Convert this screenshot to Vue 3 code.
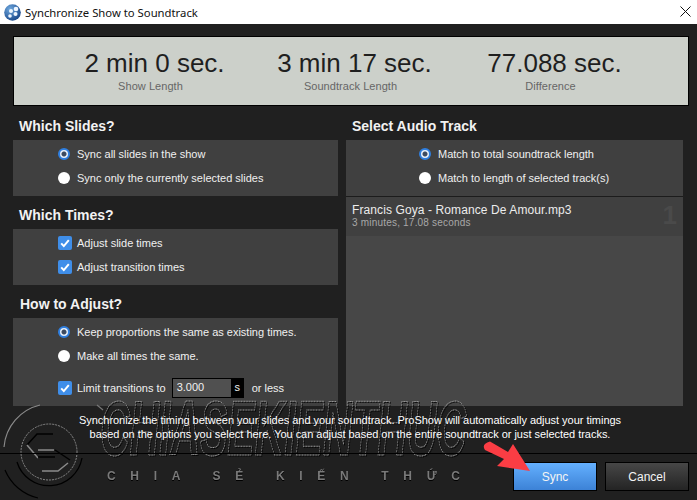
<script setup>
const stats = [
  { value: '2 min 0 sec.', label: 'Show Length' },
  { value: '3 min 17 sec.', label: 'Soundtrack Length' },
  { value: '77.088 sec.', label: 'Difference' }
]
</script>

<template>
  <div class="window">
    <header class="titlebar">
      <svg class="app-icon" width="17" height="17" viewBox="0 0 17 17">
        <defs>
          <radialGradient id="orb" cx="35%" cy="30%" r="80%">
            <stop offset="0" stop-color="#6fa8de" />
            <stop offset="1" stop-color="#124084" />
          </radialGradient>
        </defs>
        <circle cx="8.500" cy="8.500" r="8.300" fill="url(#orb)" />
        <circle cx="12" cy="5" r="2.300" fill="#eef6ff" />
        <circle cx="7" cy="7" r="2" fill="#eef6ff" />
        <circle cx="11.500" cy="10" r="2" fill="#eef6ff" />
        <circle cx="6" cy="12" r="1.800" fill="#eef6ff" />
      </svg>
      <span class="title">Synchronize Show to Soundtrack</span>
      <svg class="close" width="11" height="11" viewBox="0 0 11 11">
        <path d="M.5.5l10 10M10.500.5l-10 10" stroke="#111" stroke-width="1" fill="none" />
      </svg>
    </header>

    <section class="stats">
      <div v-for="s in stats" :key="s.label" class="stat">
        <div class="stat-value">{{ s.value }}</div>
        <div class="stat-label">{{ s.label }}</div>
      </div>
    </section>

    <div class="columns">
      <div class="col-left">
        <h3 class="heading first">Which Slides?</h3>
        <div class="panel">
          <div class="row"><i class="radio on"></i>Sync all slides in the show</div>
          <div class="row"><i class="radio"></i>Sync only the currently selected slides</div>
        </div>

        <h3 class="heading">Which Times?</h3>
        <div class="panel">
          <div class="row">
            <svg class="check" viewBox="0 0 14 14"><rect width="14" height="14" rx="2" fill="#3f8ee9" /><path d="M3.200 7.400l2.600 2.700 5-6" stroke="#fff" stroke-width="2" fill="none" /></svg>
            <span>Adjust slide times</span>
          </div>
          <div class="row">
            <svg class="check" viewBox="0 0 14 14"><rect width="14" height="14" rx="2" fill="#3f8ee9" /><path d="M3.200 7.400l2.600 2.700 5-6" stroke="#fff" stroke-width="2" fill="none" /></svg>
            <span>Adjust transition times</span>
          </div>
        </div>

        <h3 class="heading shifted">How to Adjust?</h3>
        <div class="panel">
          <div class="row"><i class="radio on"></i>Keep proportions the same as existing times.</div>
          <div class="row"><i class="radio"></i>Make all times the same.</div>
          <div class="row limit">
            <svg class="check" viewBox="0 0 14 14"><rect width="14" height="14" rx="2" fill="#3f8ee9" /><path d="M3.200 7.400l2.600 2.700 5-6" stroke="#fff" stroke-width="2" fill="none" /></svg>
            <span>Limit transitions to</span>
            <span class="field"><span class="field-value">3.000</span><span class="field-unit">s</span></span>
            <span class="suffix">or less</span>
          </div>
        </div>
      </div>

      <div class="col-right">
        <h3 class="heading first">Select Audio Track</h3>
        <div class="panel audio">
          <div class="row"><i class="radio on"></i>Match to total soundtrack length</div>
          <div class="row"><i class="radio"></i>Match to length of selected track(s)</div>
        </div>
        <div class="tracks">
          <div class="track">
            <div class="track-name">Francis Goya - Romance De Amour.mp3</div>
            <div class="track-sub">3 minutes, 17.08 seconds</div>
            <span class="track-num">1</span>
          </div>
        </div>
      </div>
    </div>

    <p class="help">
      Synchronize the timing between your slides and your soundtrack. ProShow will automatically adjust your timings<br />
      based on the options you select here. You can adjust based on the entire soundtrack or just selected tracks.
    </p>

    <footer class="footer">
      <button class="btn primary">Sync</button>
      <button class="btn">Cancel</button>
    </footer>

    <svg class="watermark" width="697" height="105" viewBox="0 395 697 105">
      <g fill="none">
        <path d="M40 405A47 47 0 0 0 4 447" stroke="#8a8a8a" stroke-width="1.200" />
        <path d="M5 470A47 47 0 0 0 38 498" stroke="#000" stroke-width="1.200" />
        <path d="M97 405l6 5" stroke="#777" stroke-width="1.200" />
        <circle cx="49" cy="452" r="28" stroke="#8a8a8a" stroke-width="1" stroke-dasharray="2 1" />
        <path d="M17 462A33.500 33.500 0 0 0 82 458" stroke="#000" stroke-width="1.300" />
        <path d="M53 434H37L27 445" stroke="#000" stroke-width="1.500" />
        <path d="M27 445L38 458" stroke="#8a8a8a" stroke-width="1.500" />
        <path d="M38 450H54" stroke="#8a8a8a" stroke-width="1.500" />
        <path d="M38 457H55" stroke="#000" stroke-width="1.500" />
        <path d="M55 450L70 460" stroke="#000" stroke-width="1.500" />
        <path d="M68 463L58 471H42" stroke="#8a8a8a" stroke-width="1.500" />
      </g>
      <text class="wm-big" x="100" y="455" textLength="366" lengthAdjust="spacingAndGlyphs">CHIASEKIENTHUC</text>
      <text class="wm-small" x="107" y="480" textLength="353" lengthAdjust="spacing">CHIA SẺ KIẾN THỨC</text>
    </svg>

    <svg class="arrow" width="60" height="40" viewBox="480 438 60 40">
      <path d="M490 441.500L508 452L513 444L530 471L497 466L504 459L485 450Q481 444 490 441.500Z" fill="#fb3d44" />
    </svg>
  </div>
</template>

<style>
html, body { margin: 0; background: #202020; }
</style>

<style scoped>
.window {
  position: relative;
  width: 697px;
  height: 500px;
  overflow: hidden;
  background: #202020;
  font-family: "Liberation Sans", Arial, sans-serif;
  color: #fff;
}
.titlebar {
  height: 24px;
  background: #fff;
  display: flex;
  align-items: center;
  padding: 0 6px 0 4px;
}
.app-icon { margin-right: 4px; }
.title {
  font: 11.3px "Noto Sans", "Open Sans", sans-serif;
  color: #111;
  flex: 1;
}
.close { margin-bottom: 1px; }

.stats {
  box-sizing: border-box;
  width: 676px;
  height: 70px;
  margin: 12px 0 0 13px;
  padding-left: 7px;
  background: #ccd0ca;
  border: 1px solid #000;
  display: flex;
  justify-content: center;
}
.stat { width: 200px; text-align: center; }
.stat-value {
  margin-top: 10px;
  font-size: 26px;
  line-height: 32px;
  color: #1f1f1f;
}
.stat-label {
  padding-right: 8px;
  font-size: 11px;
  line-height: 14px;
  color: #666;
  letter-spacing: 0.05px;
}

.columns {
  display: flex;
  gap: 8px;
  margin-left: 13px;
}
.col-left { width: 325px; }
.col-right { width: 337px; }

.heading {
  margin: 0;
  height: 33px;
  box-sizing: border-box;
  padding: 12px 0 0 6px;
  font-size: 14px;
  line-height: 14px;
  font-weight: bold;
  color: #f2f2f2;
}
.heading.first { height: 34px; padding-top: 13px; }
.heading.shifted { padding-left: 7px; }

.panel {
  background: #404040;
  padding: 2px 0 6px 45px;
}
.panel.audio { padding-left: 73px; }
.row {
  height: 24px;
  display: flex;
  align-items: center;
  font-size: 11px;
  color: #f0f0f0;
  white-space: nowrap;
}
.row.limit { margin-top: 8px; }

.radio {
  box-sizing: border-box;
  width: 12px;
  height: 12px;
  border-radius: 50%;
  background: #fff;
  margin-right: 7px;
  flex: none;
}
.radio.on {
  border: 2px solid #2f7fe0;
  background: radial-gradient(circle, #3c4a60 0 2px, #e8f0fa 3px);
}
.check {
  width: 14px;
  height: 14px;
  margin-right: 5px;
  flex: none;
}
.field {
  display: flex;
  width: 72px;
  height: 20px;
  margin-left: 6px;
  background: #000;
  align-items: stretch;
}
.field-value {
  box-sizing: border-box;
  width: 58px;
  margin: 1px 0 1px 1px;
  padding: 0 0 2px 4px;
  background: #505050;
  font-size: 11px;
  line-height: 16px;
  color: #f0f0f0;
}
.field-unit {
  flex: 1;
  text-align: center;
  font-size: 11px;
  line-height: 18px;
}
.suffix { margin-left: 8px; }

.tracks {
  background: #474747;
  border-top: 1px solid #1c1c1c;
  height: 209px;
}
.track {
  position: relative;
  height: 39px;
  background: #404040;
  box-sizing: border-box;
  padding: 6px 6px;
}
.track-name { font-size: 12px; line-height: 15px; color: #ececec; letter-spacing: 0.1px; }
.track-sub { font-size: 10px; line-height: 12px; margin-top: -1px; color: #a8a8a8; letter-spacing: 0.2px; }
.track-num {
  position: absolute;
  right: 6px;
  top: 5px;
  font-size: 26px;
  line-height: 26px;
  font-weight: bold;
  color: #4a4a4a;
}

.help {
  position: relative;
  z-index: 2;
  box-sizing: border-box;
  margin: 7px 0 0;
  width: 697px;
  padding-left: 3px;
  text-align: center;
  font-size: 11px;
  line-height: 14px;
  letter-spacing: -0.03px;
  color: #fff;
}

.footer {
  position: absolute;
  left: 0;
  right: 0;
  top: 453px;
  height: 47px;
  border-top: 1px solid #000;
  box-sizing: border-box;
  display: flex;
  justify-content: flex-end;
  gap: 8px;
  padding: 8px 8px 0 0;
  z-index: 1;
}
.btn {
  box-sizing: border-box;
  width: 84px;
  height: 29px;
  padding: 0;
  border: 1px solid #000;
  background: linear-gradient(#474747, #242424);
  color: #f4f4f4;
  font: 12px "Liberation Sans", Arial, sans-serif;
}
.btn.primary { background: linear-gradient(#64b0ff, #3c82d6); }

.watermark {
  position: absolute;
  left: 0;
  top: 395px;
  pointer-events: none;
}
.wm-big {
  font: italic bold 78px "Liberation Sans", sans-serif;
  fill: none;
  stroke: #999;
  stroke-width: 1;
  stroke-dasharray: 2 1;
  filter: drop-shadow(1px 1px 0 #000);
}
.wm-small {
  font: bold 12px "Liberation Sans", "Noto Sans", sans-serif;
  fill: #7a7a7a;
  filter: drop-shadow(0 1px 0 #000);
}
.arrow {
  position: absolute;
  left: 480px;
  top: 438px;
  z-index: 3;
}
</style>
